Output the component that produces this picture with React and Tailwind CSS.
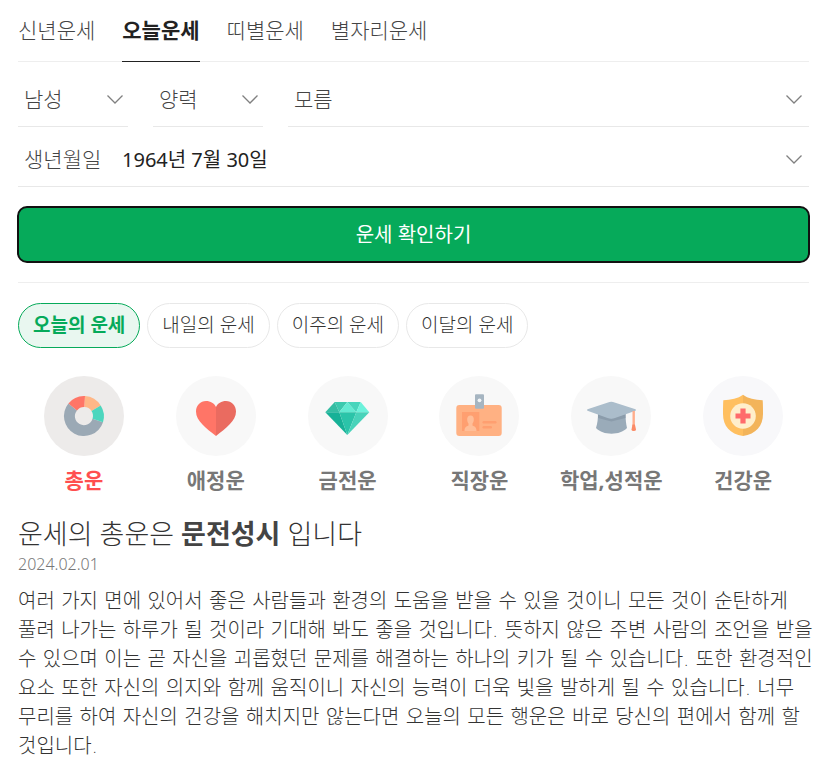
import { useState } from "react";
import clsx from "clsx";

const tabs = ["신년운세", "오늘운세", "띠별운세", "별자리운세"];
const periods = ["오늘의 운세", "내일의 운세", "이주의 운세", "이달의 운세"];

const resultLines = [
  "여러 가지 면에 있어서 좋은 사람들과 환경의 도움을 받을 수 있을 것이니 모든 것이 순탄하게",
  "풀려 나가는 하루가 될 것이라 기대해 봐도 좋을 것입니다. 뜻하지 않은 주변 사람의 조언을 받을",
  "수 있으며 이는 곧 자신을 괴롭혔던 문제를 해결하는 하나의 키가 될 수 있습니다. 또한 환경적인",
  "요소 또한 자신의 의지와 함께 움직이니 자신의 능력이 더욱 빛을 발하게 될 수 있습니다. 너무",
  "무리를 하여 자신의 건강을 해치지만 않는다면 오늘의 모든 행운은 바로 당신의 편에서 함께 할",
  "것입니다.",
];

function DonutIcon() {
  return (
    <svg viewBox="0 0 80 80" className="size-20" aria-hidden="true">
      <path d="M59 46.2A20 20 0 1 1 24.4 27.5L33 34.4A9 9 0 1 0 48.5 42.8Z" fill="#9ba9b5" />
      <path d="M24.4 27.5A20 20 0 0 1 41 20L40.5 31A9 9 0 0 0 33 34.4Z" fill="#ff7567" />
      <path d="M41 20A20 20 0 0 1 56.7 29.5L47.5 35A9 9 0 0 0 40.5 31Z" fill="#ffb787" />
      <path d="M56.7 29.5A20 20 0 0 1 59 46.2L48.5 42.8A9 9 0 0 0 47.5 35Z" fill="#4dd6be" />
    </svg>
  );
}

function HeartIcon() {
  return (
    <svg viewBox="0 0 80 80" className="size-20" aria-hidden="true">
      <path d="M40 60C30 52 20 45 20 35.5C20 29.5 24.5 25 30 25C34.5 25 38.5 27.5 40 31Z" fill="#ff7567" />
      <path d="M40 60C50 52 60 45 60 35.5C60 29.5 55.5 25 50 25C45.5 25 41.5 27.5 40 31Z" fill="#ea6b60" />
    </svg>
  );
}

function DiamondIcon() {
  return (
    <svg viewBox="0 0 80 80" className="size-20" aria-hidden="true">
      <path d="M26.7 26H39.3L31.3 36.3Z" fill="#3cc9ae" />
      <path d="M26.7 26L31.3 36.3H17.3Z" fill="#35bda3" />
      <path d="M39.3 26L48.3 36.3H31.3Z" fill="#63ead2" />
      <path d="M39.3 26H52.7L48.3 36.3Z" fill="#48d5bc" />
      <path d="M52.7 26L61.3 36.3H48.3Z" fill="#6cf2db" />
      <path d="M17.3 36.3H31.3L39.3 59Z" fill="#17b197" />
      <path d="M31.3 36.3H48.3L39.3 59Z" fill="#2bc4a9" />
      <path d="M48.3 36.3H61.3L39.3 59Z" fill="#48d3ba" />
    </svg>
  );
}

function BadgeIcon() {
  return (
    <svg viewBox="0 0 80 80" className="size-20" aria-hidden="true">
      <rect x="17.3" y="29" width="45.4" height="31" rx="3" fill="#ffb183" />
      <rect x="23" y="36" width="17.3" height="19" fill="#ff9f70" />
      <path d="M31.5 39.5C34 39.5 35 41.5 34.8 44C34.6 46 34 47 33.5 47.5V49.5C36 50.5 37.5 51.5 37.5 55H25.5C25.5 51.5 27 50.5 29.5 49.5V47.5C29 47 28.4 46 28.2 44C28 41.5 29 39.5 31.5 39.5Z" fill="#ffbe98" />
      <rect x="43.5" y="45" width="14" height="2.5" rx="1.2" fill="#ff9f70" />
      <rect x="43.5" y="50" width="9.5" height="2.5" rx="1.2" fill="#ff9f70" />
      <rect x="36" y="18.3" width="9" height="14.4" rx="1" fill="#a6b5c1" />
      <circle cx="40.5" cy="24.3" r="1.9" fill="#f2f5f7" />
    </svg>
  );
}

function CapIcon() {
  return (
    <svg viewBox="0 0 80 80" className="size-20" aria-hidden="true">
      <path d="M27 37H54.5C54.5 43 55 48 56 52C52 56 47 57.7 40.5 57.7C34 57.7 29 56 25 52C26.5 47 27 43 27 37Z" fill="#9aabb9" />
      <path d="M27 38L40.3 42.5L54.5 38V42L40.3 45.5L27 42Z" fill="#8b9cab" />
      <path d="M16.5 33.2L38.5 26Q40.3 25.5 42 26L64.5 33.2Q65.5 34 64.5 34.8L44 42Q40.3 43.3 36.5 42L16.5 34.8Q15.5 34 16.5 33.2Z" fill="#abbdcb" />
      <path d="M62.7 35V50" stroke="#ffad8c" strokeWidth="2.4" />
      <path d="M61.5 48.5H63.9L65 53.5Q65 55 62.7 55Q60.5 55 60.5 53.5Z" fill="#fb8a66" />
    </svg>
  );
}

function ShieldIcon() {
  return (
    <svg viewBox="0 0 80 80" className="size-20" aria-hidden="true">
      <path d="M40 18.7C35 22.5 28 23.8 20.3 24.3C20 29 20 34 20 38C20 50 27 58 40 60Z" fill="#ffbf5f" />
      <path d="M40 18.7C45 22.5 52 23.8 59.7 24.3C60 29 60 34 60 38C60 50 53 58 40 60Z" fill="#f3b45a" />
      <circle cx="40" cy="40" r="12.8" fill="#ffeecb" />
      <path d="M37.4 32.5H42.6V37.4H47.5V42.6H42.6V47.5H37.4V42.6H32.5V37.4H37.4Z" fill="#ff6b6b" />
    </svg>
  );
}

const categories = [
  { name: "총운", icon: DonutIcon, bg: "bg-[#edebea]" },
  { name: "애정운", icon: HeartIcon, bg: "bg-[#f8f8f8]" },
  { name: "금전운", icon: DiamondIcon, bg: "bg-[#f8f8f8]" },
  { name: "직장운", icon: BadgeIcon, bg: "bg-[#f8f8f8]" },
  { name: "학업,성적운", icon: CapIcon, bg: "bg-[#f8f8f8]" },
  { name: "건강운", icon: ShieldIcon, bg: "bg-[#f8f8fa]" },
];

function Chevron({ className = "mr-[5px]" }) {
  return (
    <svg
      viewBox="0 0 16 9"
      className={clsx("pointer-events-none col-start-1 row-start-1 h-[9px] w-4 justify-self-end", className)}
      fill="none"
      stroke="#808080"
      strokeWidth="1.3"
      aria-hidden="true"
    >
      <path d="M0.5 0.5L8 8L15.5 0.5" />
    </svg>
  );
}

function SelectField({ label, options, className, chevronClass }) {
  return (
    <div className={clsx("grid h-[60px] items-center border-b border-[#e8e8e8] pt-[5px]", className)}>
      <select
        aria-label={label}
        className="col-start-1 row-start-1 h-full w-full appearance-none bg-transparent pt-[2px] pl-[6px] text-[21px] text-[#444] outline-none"
      >
        {options.map((option) => (
          <option key={option}>{option}</option>
        ))}
      </select>
      <Chevron className={chevronClass} />
    </div>
  );
}

function App() {
  const [tab, setTab] = useState("오늘운세");
  const [period, setPeriod] = useState("오늘의 운세");
  const [category, setCategory] = useState("총운");

  return (
    <main className="bg-white px-[18px] pb-5 font-['Noto_Sans','Noto_Sans_CJK_KR',sans-serif] font-light text-[#333]">
      <nav className="flex h-[62px] gap-[27px] border-b border-[#eee]">
        {tabs.map((name) => (
          <a
            key={name}
            href="#"
            onClick={() => setTab(name)}
            className={clsx(
              "-mb-px flex items-center border-b text-[21px]",
              name === tab ? "border-[#222] font-bold text-[#222]" : "border-transparent text-[#444]"
            )}
          >
            {name}
          </a>
        ))}
      </nav>

      <form onSubmit={(e) => e.preventDefault()}>
        <div className="flex gap-[25px] pt-[5px]">
          <SelectField label="성별" options={["남성", "여성"]} className="w-[110px]" />
          <SelectField label="양력/음력" options={["양력", "음력"]} className="w-[110px]" />
          <SelectField label="태어난 시간" options={["모름"]} className="flex-1" chevronClass="mr-[7px]" />
        </div>
        <div className="flex h-[60px] items-center border-b border-[#e8e8e8] pt-[5px]">
          <label htmlFor="birth" className="w-[104px] pt-[2px] pl-[6px] text-[21px] text-[#444]">
            생년월일
          </label>
          <div className="grid h-full flex-1 items-center">
            <select
              id="birth"
              className="col-start-1 row-start-1 h-full w-full appearance-none bg-transparent pt-[2px] text-xl font-normal text-[#222] outline-none"
            >
              <option>1964년 7월 30일</option>
            </select>
            <Chevron className="mr-[7px]" />
          </div>
        </div>
        <div className="-mx-px py-[19px]">
          <button
            type="submit"
            className="h-[57px] w-full rounded-[10px] border-2 border-[#111] bg-[#06aa5a] text-xl font-normal text-white"
          >
            운세 확인하기
          </button>
        </div>
      </form>

      <div className="flex gap-[7px] border-t border-[#eee] pt-5">
        {periods.map((name) => (
          <button
            key={name}
            type="button"
            onClick={() => setPeriod(name)}
            className={clsx(
              "h-[45px] rounded-full border px-[14px] text-[19px]",
              name === period
                ? "border-[#06aa5a] bg-[#e9f7f0] font-bold text-[#06aa5a]"
                : "border-[#e8e8e8] text-[#333]"
            )}
          >
            {name}
          </button>
        ))}
      </div>

      <div className="grid grid-cols-6 pt-7">
        {categories.map(({ name, icon: Icon, bg }) => (
          <button
            key={name}
            type="button"
            onClick={() => setCategory(name)}
            className={clsx(
              "flex flex-col items-center gap-2 text-[21px] leading-8 font-bold whitespace-nowrap",
              name === category ? "text-[#ff4f4f]" : "text-[#777]"
            )}
          >
            <span className={clsx("rounded-full", bg)}>
              <Icon />
            </span>
            {name}
          </button>
        ))}
      </div>

      <section className="-mr-2 pt-5">
        <h1 className="text-[27px] leading-9">
          운세의 총운은 <strong className="font-bold text-[#444]">문전성시</strong> 입니다
        </h1>
        <p className="text-base leading-6 text-[#777]">2024.02.01</p>
        <p className="pt-[11px] font-['DejaVu_Sans','Noto_Sans_CJK_KR',sans-serif] text-xl leading-[29px]">
          {resultLines.map((line) => (
            <span key={line} className="block">
              {line}
            </span>
          ))}
        </p>
      </section>
    </main>
  );
}

export default App;
